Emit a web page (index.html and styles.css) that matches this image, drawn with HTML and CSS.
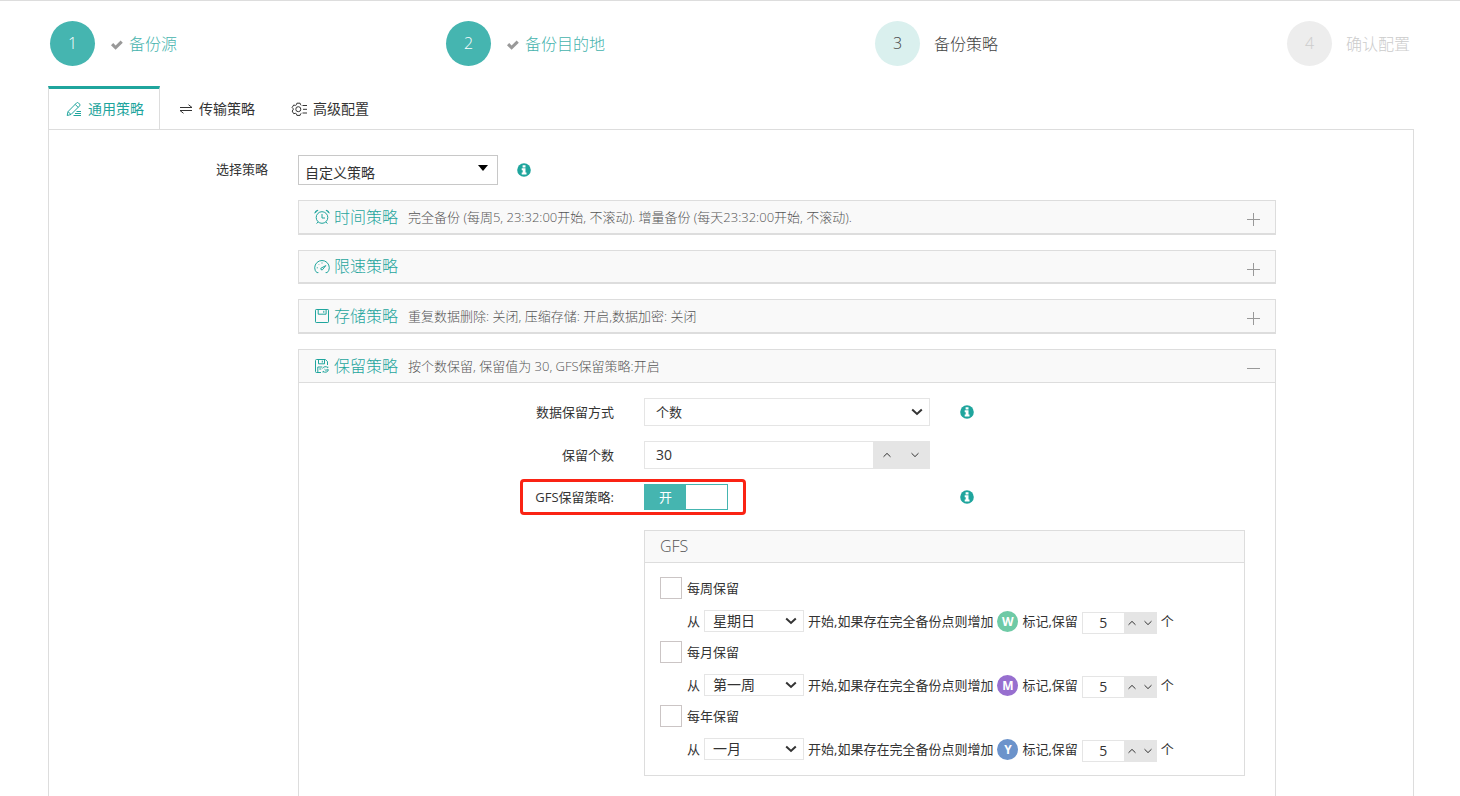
FILE: index.html
```html
<!DOCTYPE html>
<html lang="zh-CN">
<head>
<meta charset="utf-8">
<meta name="viewport" content="width=device-width, initial-scale=1">
<title>备份策略</title>
<link rel="stylesheet" href="styles.css">
</head>
<body>
<svg class="sprite" aria-hidden="true">
  <symbol id="i-check" viewBox="0 0 12 12"><path d="M0 6.2 2.2 4 4.6 6.4 9.6 1.6l2.2 2.2-7.2 7z" fill="currentColor"/></symbol>
  <symbol id="i-info" viewBox="0 0 14 14"><circle cx="7" cy="7" r="6.8" fill="currentColor"/><path d="M5.6 2.2h2.9v2.2H5.6zM4.7 5.3h3.8v4.3h1v2H4.7v-2h1V7.2h-1z" fill="#fff"/></symbol>
  <symbol id="i-up" viewBox="0 0 10 10"><path d="M1.5 6.8 5 3.4l3.5 3.4" fill="none" stroke="currentColor"/></symbol>
  <symbol id="i-down" viewBox="0 0 10 10"><path d="M1.5 3.2 5 6.6l3.5-3.4" fill="none" stroke="currentColor"/></symbol>
  <symbol id="i-caret" viewBox="0 0 12 8"><path d="M1.2 1.5 6 6l4.8-4.5" fill="none" stroke="currentColor" stroke-width="2"/></symbol>
  <symbol id="i-plus" viewBox="0 0 13 13"><path d="M0 6.5h13M6.5 0v13" fill="none" stroke="currentColor"/></symbol>
  <symbol id="i-minus" viewBox="0 0 13 13"><path d="M0 6.5h13" fill="none" stroke="currentColor"/></symbol>
</svg>

<ol class="steps">
  <li class="step done"><span class="num">1</span><svg class="tick"><use href="#i-check"/></svg><span>备份源</span></li>
  <li class="step done"><span class="num">2</span><svg class="tick"><use href="#i-check"/></svg><span>备份目的地</span></li>
  <li class="step active"><span class="num">3</span><span>备份策略</span></li>
  <li class="step"><span class="num">4</span><span>确认配置</span></li>
</ol>

<main class="main">
  <nav class="tabs">
    <a class="tab current" href="#general">
      <svg class="icon" viewBox="0 0 16 16"><path d="M1.2 14.5 2 10.6 10.6 1.9q.9-.8 1.8 0l1.2 1.2q.9.9 0 1.8L5 13.5zM9.2 3.4l3 3M2 10.6 5 13.5M10.5 10.5H15M9 12.5h6M7.5 14.5H15"/></svg>
      <span>通用策略</span></a>
    <a class="tab" href="#transfer">
      <svg class="icon small" viewBox="0 0 14 14"><path d="M1 5.5h12L9.5 2.7M13 8.5H1l3.5 2.8"/></svg>
      <span>传输策略</span></a>
    <a class="tab" href="#advanced">
      <svg class="icon" viewBox="0 0 16 16"><path d="M10.3 4.2 9.5 3.7 9.1 2.2H5.9l-.4 1.5-1.2.7-1.6-.4L1.1 6.6 2.2 7.7v1.2L1.1 10l1.6 2.7 1.6-.4 1.2.6.4 1.5h3.2l.4-1.5.9-.5M11.5 4.5H16M12 8.3h4M11.5 12H16"/><circle cx="7.3" cy="8.2" r="2.5"/></svg>
      <span>高级配置</span></a>
  </nav>

  <section class="panel" id="general">
    <label class="label strategy-label" for="strategy">选择策略</label>
    <div class="strategy">
      <span class="picker"><select id="strategy"><option>自定义策略</option></select></span>
      <svg class="info"><use href="#i-info"/></svg>
    </div>

    <div class="cards">
      <section class="card">
        <header class="card-head">
          <svg class="icon" viewBox="0 0 16 16"><circle cx="8" cy="8.5" r="5.8"/><path d="M8 5v4h3M.8 4.2Q1 1.6 4 1.2M15.2 4.2Q15 1.6 12 1.2M4 13l-1.4 1.6M12 13l1.4 1.6M1 4.2 4 1.2M15 4.2 12 1.2"/></svg>
          <h2>时间策略</h2><p>完全备份 (每周5, 23:32:00开始, 不滚动). 增量备份 (每天23:32:00开始, 不滚动).</p>
          <button class="toggle" type="button" aria-label="展开"><svg><use href="#i-plus"/></svg></button>
        </header>
      </section>
      <section class="card">
        <header class="card-head">
          <svg class="icon" viewBox="0 0 16 16"><path d="M4.4 13.6H2.8Q.7 11.6.7 8.8a7.3 7.3 0 0 1 14.6 0q0 2.8-2.1 4.8h-1.6M2.8 8.8h1M4.6 5.2l.5.5M8 3.5v1"/><path d="M6.8 9.3 11.8 6.6 8.4 10.8q-1.9.6-1.6-1.5z"/></svg>
          <h2>限速策略</h2>
          <button class="toggle" type="button" aria-label="展开"><svg><use href="#i-plus"/></svg></button>
        </header>
      </section>
      <section class="card">
        <header class="card-head">
          <svg class="icon" viewBox="0 0 16 16"><path d="M2.2 1.5h11.6q.7 0 .7.7v11.6q0 .7-.7.7H2.2q-.7 0-.7-.7V2.2q0-.7.7-.7zM4.2 1.5v4.7h7.9V1.5M9.8 2.8v2"/></svg>
          <h2>存储策略</h2><p>重复数据删除: 关闭, 压缩存储: 开启,数据加密: 关闭</p>
          <button class="toggle" type="button" aria-label="展开"><svg><use href="#i-plus"/></svg></button>
        </header>
      </section>
      <section class="card open">
        <header class="card-head">
          <svg class="icon" viewBox="0 0 16 16"><path d="M7 14.5H2.5q-1 0-1-1v-11q0-1 1-1h8.8l2.2 2V7M4.5 1.5v4.3h6V1.5M8.3 2.6v2M3.8 14.5V9h4.5M5.3 11h2M8.6 10.5a3 3 0 0 1 5.2-.6V8.6M14.4 11.8a3 3 0 0 1-5.3 1.3v1.5M10.5 11.2l1.2 1 2.7-.6"/></svg>
          <h2>保留策略</h2><p>按个数保留, 保留值为 30, GFS保留策略:开启</p>
          <button class="toggle" type="button" aria-label="收起"><svg><use href="#i-minus"/></svg></button>
        </header>
        <div class="card-body">
          <div class="row">
            <label class="label" for="mode">数据保留方式</label>
            <span class="drop field">
              <select id="mode"><option>个数</option></select>
              <svg><use href="#i-caret"/></svg>
            </span>
            <svg class="info"><use href="#i-info"/></svg>
          </div>
          <div class="row">
            <label class="label" for="count">保留个数</label>
            <div class="spinner field">
              <input id="count" type="text" value="30">
              <button type="button" aria-label="增加"><svg><use href="#i-up"/></svg></button>
              <button type="button" aria-label="减少"><svg><use href="#i-down"/></svg></button>
            </div>
          </div>
          <div class="row highlighted">
            <label class="label" for="gfs">GFS保留策略:</label>
            <label class="switch"><input id="gfs" type="checkbox" checked><span>开</span></label>
            <svg class="info"><use href="#i-info"/></svg>
          </div>

          <section class="gfs">
            <h3>GFS</h3>
            <div class="gfs-body">
              <label class="keep"><input type="checkbox"><span>每周保留</span></label>
              <div class="rule">
                <label for="week">从</label>
                <span class="drop">
                  <select id="week"><option>星期日</option></select>
                  <svg><use href="#i-caret"/></svg>
                </span>
                <span>开始,如果存在完全备份点则增加</span>
                <b class="badge week">W</b>
                <label for="week-n">标记,保留</label>
                <span class="spinner mini">
                  <input id="week-n" type="text" value="5">
                  <button type="button" aria-label="增加"><svg><use href="#i-up"/></svg></button>
                  <button type="button" aria-label="减少"><svg><use href="#i-down"/></svg></button>
                </span>
                <span>个</span>
              </div>
              <label class="keep"><input type="checkbox"><span>每月保留</span></label>
              <div class="rule">
                <label for="month">从</label>
                <span class="drop">
                  <select id="month"><option>第一周</option></select>
                  <svg><use href="#i-caret"/></svg>
                </span>
                <span>开始,如果存在完全备份点则增加</span>
                <b class="badge month">M</b>
                <label for="month-n">标记,保留</label>
                <span class="spinner mini">
                  <input id="month-n" type="text" value="5">
                  <button type="button" aria-label="增加"><svg><use href="#i-up"/></svg></button>
                  <button type="button" aria-label="减少"><svg><use href="#i-down"/></svg></button>
                </span>
                <span>个</span>
              </div>
              <label class="keep"><input type="checkbox"><span>每年保留</span></label>
              <div class="rule">
                <label for="year">从</label>
                <span class="drop">
                  <select id="year"><option>一月</option></select>
                  <svg><use href="#i-caret"/></svg>
                </span>
                <span>开始,如果存在完全备份点则增加</span>
                <b class="badge year">Y</b>
                <label for="year-n">标记,保留</label>
                <span class="spinner mini">
                  <input id="year-n" type="text" value="5">
                  <button type="button" aria-label="增加"><svg><use href="#i-up"/></svg></button>
                  <button type="button" aria-label="减少"><svg><use href="#i-down"/></svg></button>
                </span>
                <span>个</span>
              </div>
            </div>
          </section>
        </div>
      </section>
    </div>
  </section>
</main>
</body>
</html>
```

FILE: styles.css
```css
*, *::after { box-sizing: border-box; }

body {
  margin: 0;
  min-height: 100vh;
  display: flex;
  flex-direction: column;
  border-top: 1px solid #ddd;
  background: #fff;
  color: #333;
  font: 13px/20px "Open Sans", "Noto Sans CJK SC", sans-serif;
}

h2, h3, p, ol { margin: 0; padding: 0; }

input, select, button { font: inherit; color: inherit; margin: 0; }

button { border: 0; padding: 0; background: none; cursor: pointer; }

.sprite { display: none; }

/* Wizard steps */
.steps {
  display: grid;
  grid-template-columns: 396fr 429fr 412fr auto;
  padding: 20px 50px;
  list-style: none;
  font-size: 16px;
  font-weight: 300;
}

.step { display: flex; align-items: center; color: #ccc; line-height: 22px; }

.num {
  width: 45px;
  height: 45px;
  margin-right: 14px;
  border-radius: 50%;
  background: #ededed;
  line-height: 44px;
  text-align: center;
}

.done { color: #45b3ad; }
.done .num { background: #45b5b0; color: #fff; }
.active { color: #444; }
.active .num { background: #daf0ee; }

.tick { width: 12px; height: 12px; margin: 3px 6px 0 2px; color: #999; }

/* Tabs and main panel */
.main { flex: 1; display: flex; flex-direction: column; padding: 0 46px 0 48px; }

.tabs { display: flex; margin-bottom: -1px; }

.tab {
  display: flex;
  align-items: center;
  gap: 6px;
  height: 44px;
  padding: 0 17px;
  border: 1px solid transparent;
  border-top-width: 3px;
  color: #333;
  font-size: 14px;
  text-decoration: none;
}

.tab.current {
  padding: 0 15px 0 17px;
  border-color: #1fa59d #ddd #fff;
  background: #fff;
  color: #1fa59d;
  margin-right: 1px;
}

.icon { width: 16px; height: 16px; fill: none; stroke: currentColor; stroke-width: 1; }
.icon.small { width: 14px; height: 14px; }

.panel {
  flex: 1;
  display: grid;
  grid-template-columns: 219px minmax(0, 1fr);
  grid-template-rows: 30px 1fr;
  gap: 15px 30px;
  padding: 25px 137px 0 0;
  border: 1px solid #ddd;
  border-bottom: 0;
}

.label { text-align: right; }
.strategy-label { line-height: 28px; }
.strategy { display: flex; align-items: center; gap: 19px; }
.info { width: 14px; height: 14px; color: #1fa59d; }

.picker { position: relative; }
.picker select {
  display: block;
  width: 200px;
  height: 30px;
  padding: 5px 6px 0;
  border: 1px solid #c8c8c8;
  border-radius: 0;
  background: #fff;
  appearance: none;
  font-size: 14px;
}
.picker::after {
  content: "";
  position: absolute;
  top: 10px;
  right: 10px;
  border: 5px solid transparent;
  border-top: 6px solid #000;
  border-bottom: 0;
  pointer-events: none;
}

/* Collapsible cards */
.cards { grid-column: 2; display: flex; flex-direction: column; gap: 15px; }
.card { border: 1px solid #ddd; border-bottom-width: 2px; }
.card.open { flex: 1; border-bottom: 0; }

.card-head {
  display: flex;
  align-items: center;
  padding: 0 15px;
  background: #f9f9f9;
  color: #1fa59d;
}
.open .card-head { border-bottom: 1px solid #ddd; }
.card-head h2 { margin: 0 10px 0 4px; font-size: 16px; font-weight: 300; line-height: 31px; }
.card-head p { color: #555; font-weight: 300; line-height: 32px; }
.toggle { display: flex; margin-left: auto; padding: 5px 0 0; color: #999; }
.toggle svg { width: 13px; height: 13px; }

.card-body { display: flex; flex-direction: column; gap: 15px; padding: 15px 30px 20px 0; }

.row {
  display: grid;
  grid-template-columns: 315px 286px auto;
  justify-content: start;
  align-items: center;
  column-gap: 30px;
}

.field { width: 100%; height: 28px; border: 1px solid #e5e5e5; background: #fff; }

.drop { position: relative; display: block; }
.drop select {
  display: block;
  width: 100%;
  height: 100%;
  padding: 0 11px;
  border: 0;
  border-radius: 0;
  background: none;
  appearance: none;
}
.drop svg {
  position: absolute;
  top: 50%;
  right: 6px;
  width: 12px;
  height: 8px;
  margin-top: -4px;
  pointer-events: none;
}

.spinner { display: flex; }
.spinner input { flex: 1; min-width: 0; padding: 0 11px; border: 0; background: none; font-size: 14px; }
.spinner button { width: 28px; background: #e5e5e5; }
.spinner svg { display: block; width: 10px; height: 10px; margin: auto; }

.switch {
  position: relative;
  width: 84px;
  height: 26px;
  border: 1px solid #45b5b0;
  color: #fff;
  text-align: center;
}
.switch input { position: absolute; inset: 0; opacity: 0; }
.switch span { display: block; width: 41px; background: #45b5b0; line-height: 24px; }

.highlighted { position: relative; }
.highlighted::after {
  content: "";
  position: absolute;
  top: -5px;
  left: 221px;
  width: 226px;
  height: 36px;
  border: 3px solid #fa2314;
  border-radius: 4px;
  pointer-events: none;
}

/* GFS rules */
.gfs { margin: 5px 0 0 345px; border: 1px solid #ddd; }
.gfs h3 {
  padding: 0 15px;
  border-bottom: 1px solid #ddd;
  background: #f9f9f9;
  color: #555;
  font-size: 16px;
  font-weight: 300;
  line-height: 31px;
}
.gfs-body { padding: 14px 15px 6px; }

.keep { display: flex; align-items: center; gap: 5px; height: 22px; line-height: 18px; }
.keep input {
  width: 22px;
  height: 22px;
  border: 1px solid #cbc5c5;
  background: #fff;
  appearance: none;
}

.rule { display: flex; align-items: center; gap: 4px; height: 42px; padding: 2px 0 0 27px; white-space: nowrap; }
.rule .drop { width: 100px; height: 22px; border: 1px solid #e5e5e5; }
.rule select { padding: 0 8px; font-size: 14px; }

.badge {
  width: 21px;
  height: 21px;
  border-radius: 50%;
  color: #fff;
  font-size: 12px;
  line-height: 21px;
  text-align: center;
}
.week { background: #6fcaa6; }
.month { background: #976fcf; }
.year { background: #6c93cb; }

.spinner.mini { width: 75px; height: 22px; margin-top: 4px; border: 1px solid #e5e5e5; }
.mini input { padding: 0; text-align: center; }
.mini button { width: 16px; }
```
